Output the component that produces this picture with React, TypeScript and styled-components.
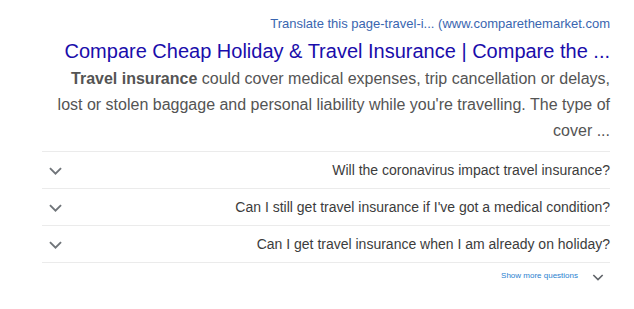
import * as React from "react";
import styled, { createGlobalStyle } from "styled-components";

const GlobalStyle = createGlobalStyle`
  html, body {
    margin: 0;
    padding: 0;
    background: #ffffff;
  }
  body {
    font-family: "Liberation Sans", Arial, sans-serif;
  }
`;

const Result = styled.div`
  width: 568px;
  padding: 15px 0 0 42px;
  text-align: right;
`;

const TranslateLine = styled.div`
  font-size: 13px;
  line-height: 18px;
  color: #3a66b0;
`;

const Title = styled.a`
  display: block;
  font-size: 20px;
  line-height: 26px;
  margin-top: 5px;
  color: #1a0dab;
  text-decoration: none;
`;

const Snippet = styled.div`
  font-size: 16px;
  line-height: 26px;
  color: #545454;
  margin-top: 2px;
  padding-left: 8px;
`;

const Questions = styled.div`
  margin-top: 7px;
  border-top: 1px solid #ebebeb;
`;

const QuestionRow = styled.div`
  display: flex;
  align-items: center;
  justify-content: space-between;
  height: 36px;
  padding-left: 4px;
  border-bottom: 1px solid #ebebeb;
`;

const QuestionText = styled.span`
  font-size: 14px;
  color: #3c3c3c;
`;

const ChevronBox = styled.span<{ $size: number; $color: string }>`
  display: flex;
  width: ${(p) => p.$size}px;
  height: ${(p) => p.$size}px;
  color: ${(p) => p.$color};
`;

const MoreRow = styled.div`
  display: flex;
  align-items: center;
  justify-content: flex-end;
  gap: 12px;
  padding-top: 6px;
  margin-right: 4px;
`;

const MoreLink = styled.span`
  font-size: 8px;
  color: #2a7fcf;
  margin-top: -3px;
`;

const Chevron = ({ size, color }: { size: number; color: string }) => (
  <ChevronBox $size={size} $color={color}>
    <svg width={size} height={size} viewBox="0 0 24 24" fill="none">
      <path d="M5 9l7 7 7-7" stroke="currentColor" strokeWidth="2.4" />
    </svg>
  </ChevronBox>
);

const questions = [
  "Will the coronavirus impact travel insurance?",
  "Can I still get travel insurance if I've got a medical condition?",
  "Can I get travel insurance when I am already on holiday?",
];

export default function App() {
  return (
    <>
      <GlobalStyle />
      <Result>
        <TranslateLine>Translate this page-travel-i... (www.comparethemarket.com</TranslateLine>
        <Title href="#">Compare Cheap Holiday &amp; Travel Insurance | Compare the ...</Title>
        <Snippet>
          <b>Travel insurance</b> could cover medical expenses, trip cancellation or delays, lost or stolen
          baggage and personal liability while you're travelling. The type of cover ...
        </Snippet>
        <Questions>
          {questions.map((q) => (
            <QuestionRow key={q}>
              <Chevron size={19} color="#70757a" />
              <QuestionText>{q}</QuestionText>
            </QuestionRow>
          ))}
        </Questions>
        <MoreRow>
          <MoreLink>Show more questions</MoreLink>
          <Chevron size={16} color="#5f6368" />
        </MoreRow>
      </Result>
    </>
  );
}
